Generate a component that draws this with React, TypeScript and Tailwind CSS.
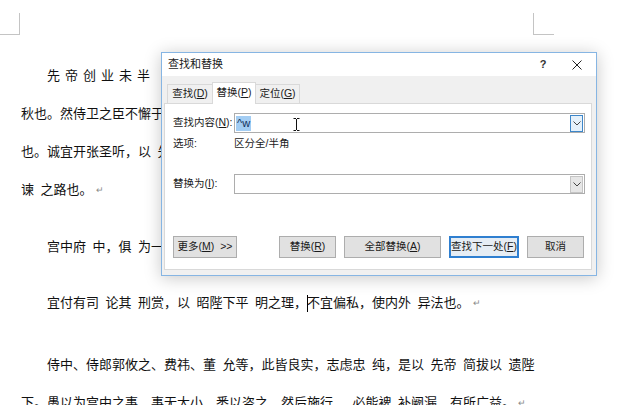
import React from "react";

const Mark = () => (
  <span className="ml-[3px] text-[9px] text-[#8a8a8a] align-middle">↵</span>
);

const Line = ({ children, indent = false }: { children: React.ReactNode; indent?: boolean }) => (
  <div
    className={`h-[38px] leading-[38px] whitespace-pre ${indent ? "pl-[26px]" : ""}`}
  >
    {children}
  </div>
);

const U = ({ c }: { c: string }) => <span className="underline">{c}</span>;

const Chevron = () => (
  <svg width="8" height="5" viewBox="0 0 8 5">
    <polyline points="0.5,0.5 4,4 7.5,0.5" fill="none" stroke="#444" strokeWidth="1" />
  </svg>
);

const Btn = ({ children, w, primary = false }: { children: React.ReactNode; w: string; primary?: boolean }) => (
  <div
    className={`${w} h-[22px] flex items-center justify-center whitespace-nowrap ${
      primary ? "border-2 border-[#2f7fd0] bg-[#e6edf4]" : "border border-[#adadad] bg-[#e1e1e1]"
    }`}
  >
    {children}
  </div>
);

export default function App() {
  const S = "\u2002";
  return (
    <div className="relative w-[640px] h-[405px] overflow-hidden bg-white text-[#111] font-['Noto_Sans_CJK_SC',sans-serif]">
      {/* page corner marks */}
      <div className="h-[56px] flex items-start pt-[13px]">
        <div className="w-[20px] h-[22px] border-r border-b border-[#c4c4c4]" />
        <div className="ml-[513px] w-[21px] h-[22px] border-l border-b border-[#c4c4c4]" />
      </div>

      {/* document text (parts hidden under the dialog omitted) */}
      <div className="pl-[21px] text-[13px]">
        <div>
          <Line indent>
            <span className="tracking-[5px]">先帝创业未半</span>
          </Line>
          <Line>秋也。然侍卫之臣不懈于</Line>
          <Line>{`也。诚宜开张圣听，以${S}先`}</Line>
          <Line>
            {`谏${S}之路也。`}
            <Mark />
          </Line>
        </div>
        <div className="mt-[19px]">
          <Line indent>{`宫中府${S}中，俱${S}为一`}</Line>
        </div>
        <div className="mt-[18px]">
          <Line indent>
            {`宜付有司${S}论其${S}刑赏，以${S}昭陛下平${S}明之理，`}
            <span className="inline-block w-px h-[17px] bg-black align-middle -mr-px" />
            {`不宜偏私，使内外${S}异法也。`}
            <Mark />
          </Line>
        </div>
        <div className="mt-[24px]">
          <Line indent>
            {`侍中、侍郎郭攸之、费祎、董${S}允等，此皆良实，志虑忠${S}纯，是以${S}先帝${S}简拔以${S}遗陛`}
          </Line>
          <Line>
            {`下。愚以为宫中之事，事无大小，悉以咨之，然后施行${S}，必能裨${S}补阙漏，有所广益。`}
            <Mark />
          </Line>
        </div>
      </div>

      {/* Find and replace dialog */}
      <div className="absolute left-[161px] top-[52px] w-[436px] h-[224px] border border-[#86b5e3] bg-[#f0f0f0] shadow-[0_2px_16px_rgba(0,0,0,0.22)] flex flex-col text-[10.5px] text-[#1a1a1a] whitespace-nowrap font-['Liberation_Sans','Noto_Sans_CJK_SC',sans-serif]">
        {/* title bar */}
        <div className="h-[23px] bg-white flex items-center pl-[6px]">
          <div className="flex-1 text-[11px]">查找和替换</div>
          <div className="w-[30px] text-center text-[11px] font-bold text-[#333]">?</div>
          <div className="w-[38px] flex items-center justify-center">
            <svg width="10" height="10" viewBox="0 0 10 10">
              <path d="M0.5 0.5 L9.5 9.5 M9.5 0.5 L0.5 9.5" stroke="#222" strokeWidth="1" />
            </svg>
          </div>
        </div>

        {/* body */}
        <div className="flex-1 flex flex-col pl-[2px] pr-[4px] pb-[5px]">
          {/* tabs */}
          <div className="h-[27px] flex items-end pl-[3px]">
            <div className="w-[45px] h-[19px] flex items-center justify-center border-l border-t border-[#d9d9d9] bg-[#f0f0f0]">
              查找(<U c="D" />)
            </div>
            <div className="relative z-10 -mb-px w-[44px] h-[22px] flex items-center justify-center border-l border-t border-r border-[#d9d9d9] bg-white pb-[2px]">
              替换(<U c="P" />)
            </div>
            <div className="w-[44px] h-[19px] flex items-center justify-center border-t border-r border-[#d9d9d9] bg-[#f0f0f0]">
              定位(<U c="G" />)
            </div>
          </div>

          {/* panel */}
          <div className="flex-1 bg-white border border-[#d9d9d9] pt-[9px] pl-[8px] pr-[6px]">
            <div className="h-[20px] flex items-center">
              <div className="w-[61px]">
                查找内容(<U c="N" />):
              </div>
              <div className="relative flex-1 h-[20px] border border-[#adadad] flex items-center pl-px">
                <span className="bg-[#a3cdf3] h-[15px] leading-[15px] px-px text-[11px] text-[#12305a]">^w</span>
                <svg className="absolute left-[58px] top-[4px]" width="7" height="13" viewBox="0 0 7 13">
                  <path d="M0.5 0.5 H3 M4 0.5 H6.5 M3.5 1 V12 M0.5 12.5 H3 M4 12.5 H6.5" stroke="#111" strokeWidth="1" fill="none" />
                </svg>
                <div className="ml-auto mr-px w-[13px] h-[17px] border border-[#3d86c9] bg-[#e5f1fb] flex items-center justify-center">
                  <Chevron />
                </div>
              </div>
            </div>
            <div className="mt-[3px] h-[16px] flex items-center">
              <div className="w-[61px]">选项:</div>
              <div>区分全/半角</div>
            </div>
            <div className="mt-[22px] h-[20px] flex items-center">
              <div className="w-[61px]">
                替换为(<U c="I" />):
              </div>
              <div className="flex-1 h-[20px] border border-[#adadad] flex items-center">
                <div className="ml-auto mr-px w-[13px] h-[17px] border border-[#c4c4c4] bg-[#e6e6e6] flex items-center justify-center">
                  <Chevron />
                </div>
              </div>
            </div>
            <div className="mt-[42px] flex items-center">
              <Btn w="w-[64px]">
                更多(<U c="M" />)&nbsp;&nbsp;&gt;&gt;
              </Btn>
              <div className="ml-[42px] flex gap-[8px]">
                <Btn w="w-[57px]">
                  替换(<U c="R" />)
                </Btn>
                <Btn w="w-[97px]">
                  全部替换(<U c="A" />)
                </Btn>
                <Btn w="w-[70px]" primary>
                  查找下一处(<U c="F" />)
                </Btn>
                <Btn w="w-[57px]">取消</Btn>
              </div>
            </div>
          </div>
        </div>
      </div>
    </div>
  );
}
